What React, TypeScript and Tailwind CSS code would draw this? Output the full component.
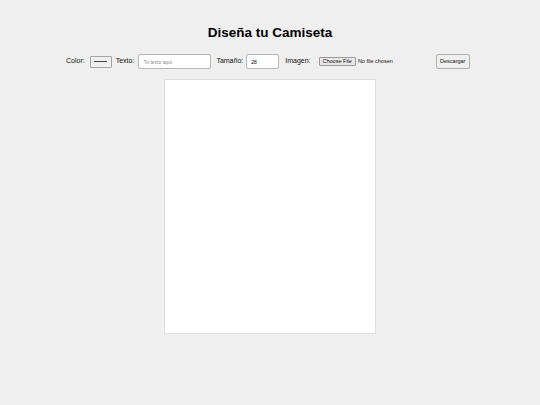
export default function App() {
  return (
    <div
      className="min-h-[405px] w-full bg-[#efefef] flex flex-col items-center"
      style={{ fontFamily: '"Liberation Sans", Arial, sans-serif' }}
    >
      <h1 className="mt-[25px] text-[13.5px] leading-[16px] font-bold text-black">Diseña tu Camiseta</h1>

      <div className="mt-[13px] w-full flex items-center pl-[66px] text-[7px] text-[#111]">
        <span>Color:</span>
        <div className="ml-[5px] w-[22px] h-[12px] border border-[#a5a5a5] rounded-[1px] bg-[#efefef] flex items-center justify-center">
          <div className="w-[13px] h-[1px] bg-[#444]" />
        </div>

        <span className="ml-[4px]">Texto:</span>
        <input
          className="ml-[4px] w-[73px] h-[15px] bg-white border border-[#b5b5b5] rounded-[2px] px-[4px] text-[5px] text-black outline-none placeholder:text-[#8a8a8a]"
          placeholder="Tu texto aquí"
        />

        <span className="ml-[5px]">Tamaño:</span>
        <input
          className="ml-[3px] w-[33px] h-[15px] bg-white border border-[#b5b5b5] rounded-[2px] px-[4px] text-[5px] text-black outline-none"
          defaultValue="28"
        />

        <span className="ml-[6px]">Imagen:</span>
        <div className="ml-[8px] flex items-center">
          <div className="h-[9px] px-[3px] border border-[#9a9a9a] rounded-[1px] bg-[#e9e9e9] text-[5.5px] leading-[7px] flex items-center">
            Choose File
          </div>
          <span className="ml-[2px] text-[5.5px]">No file chosen</span>
        </div>

        <div className="ml-[43px] w-[34px] h-[15px] border border-[#b0b0b0] rounded-[2px] bg-[#efefef] text-[5.5px] flex items-center justify-center">
          Descargar
        </div>
      </div>

      <div className="mt-[10px] w-[212px] h-[255px] bg-white border border-[#e0e0e0]" />
    </div>
  );
}
